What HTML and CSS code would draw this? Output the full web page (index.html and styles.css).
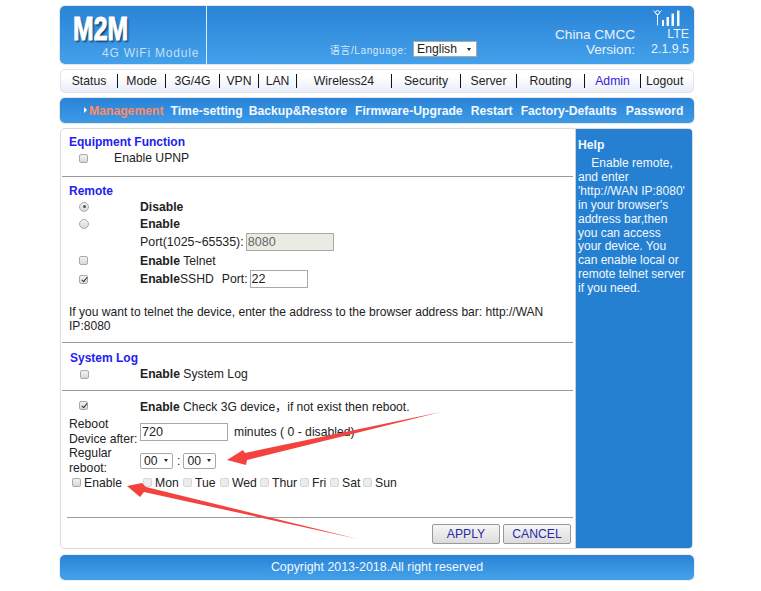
FILE: index.html
```html
<!DOCTYPE html>
<html lang="en">
<head>
<meta charset="utf-8">
<title>M2M 4G WiFi Module</title>
<link rel="stylesheet" href="styles.css">
</head>
<body>
<div class="page">
  <header class="head">
    <div class="brand">
      <div class="logo">M2M</div>
      <div class="tagline">4G WiFi Module</div>
    </div>
    <div class="head-main">
      <div class="lang"><span class="lang-label">语言/Language:</span><span class="fake-select lang-select">English<i class="caret"></i></span></div>
      <div class="status">
        <svg class="signal" width="28" height="16" viewBox="0 0 28 16">
          <g fill="none" stroke="#e8f2fb" stroke-width="1">
            <circle cx="4.5" cy="2.6" r="2"/>
            <path d="M0.5 0.5 L4.5 5 L8.5 0.5"/>
            <path d="M4.5 4 V15.5"/>
          </g>
          <g fill="#f4f9fd">
            <rect x="9" y="10" width="2" height="6"/>
            <rect x="13.5" y="7" width="2.5" height="9"/>
            <rect x="18.5" y="3.5" width="2.5" height="12.5"/>
            <rect x="24" y="0.5" width="2.5" height="15.5"/>
          </g>
        </svg>
        <div class="status-row"><span>China CMCC</span><span class="status-val">LTE</span></div>
        <div class="status-row"><span>Version:</span><span class="status-val">2.1.9.5</span></div>
      </div>
    </div>
  </header>

  <nav class="menu">
    <a class="m1">Status</a><a class="m2">Mode</a><a class="m3">3G/4G</a><a class="m4">VPN</a><a class="m5">LAN</a><a class="m6">Wireless24</a><a class="m7">Security</a><a class="m8">Server</a><a class="m9">Routing</a><a class="m10 active">Admin</a><a class="m11">Logout</a>
  </nav>

  <nav class="submenu">
    <a class="sub current"><i class="tri"></i>Management</a><a class="sub s-time">Time-setting</a><a class="sub">Backup&amp;Restore</a><a class="sub">Firmware-Upgrade</a><a class="sub">Restart</a><a class="sub s-fact">Factory-Defaults</a><a class="sub">Password</a>
  </nav>

  <main class="main">
    <section class="panel">
      <div class="block b-equip">
        <h3>Equipment Function</h3>
        <div class="row r16 narrow"><span class="cell"><i class="cb"></i></span><span>Enable UPNP</span></div>
      </div>
      <hr class="rule">
      <div class="block b-remote">
        <h3>Remote</h3>
        <div class="row r17"><span class="cell"><i class="rb on"></i></span><b>Disable</b></div>
        <div class="row r17"><span class="cell"><i class="rb"></i></span><b>Enable</b></div>
        <div class="row r20"><span class="cell"></span><span class="port-label">Port(1025~65535):</span><span class="input in-port disabled">8080</span></div>
        <div class="row r17"><span class="cell"><i class="cb"></i></span><span><b>Enable</b> Telnet</span></div>
        <div class="row r20"><span class="cell"><i class="cb on"></i></span><span><b>Enable</b>SSHD</span><span class="ssh-port">Port:</span><span class="input in-ssh">22</span></div>
        <p class="note">If you want to telnet the device, enter the address to the browser address bar: http://WAN IP:8080</p>
      </div>
      <hr class="rule">
      <div class="block b-log">
        <h3>System Log</h3>
        <div class="row r16"><span class="cell"><i class="cb"></i></span><span><b>Enable</b> System Log</span></div>
      </div>
      <hr class="rule">
      <div class="block b-reboot">
        <div class="row r17 r-check"><span class="cell"><i class="cb on"></i></span><span><b>Enable</b> Check 3G device，if not exist then reboot.</span></div>
        <div class="row r-lab r-boot"><label class="lab">Reboot Device after:</label><span class="input in-min">720</span><span class="mins">minutes ( 0 - disabled)</span></div>
        <div class="row r-lab r-reg"><label class="lab">Regular reboot:</label><span class="fake-select time">00<i class="caret"></i></span><span class="colon">:</span><span class="fake-select time">00<i class="caret"></i></span></div>
        <div class="row days">
          <span class="day-en"><i class="cb"></i>Enable</span>
          <span class="day d40"><i class="cb off"></i>Mon</span>
          <span class="day d37"><i class="cb off"></i>Tue</span>
          <span class="day d40"><i class="cb off"></i>Wed</span>
          <span class="day d40"><i class="cb off"></i>Thur</span>
          <span class="day d30"><i class="cb off"></i>Fri</span>
          <span class="day d33"><i class="cb off"></i>Sat</span>
          <span class="day d37"><i class="cb off"></i>Sun</span>
        </div>
      </div>
      <hr class="rule rule-last">
      <div class="actions"><button class="btn">APPLY</button><button class="btn">CANCEL</button></div>
    </section>
    <aside class="help">
      <h4>Help</h4>
      <p>&nbsp;&nbsp;&nbsp;&nbsp;Enable remote, and enter 'http://WAN IP:8080' in your browser's address bar,then you can access your device. You can enable local or remote telnet server if you need.</p>
    </aside>
    <svg class="arrows" width="761" height="591" viewBox="0 0 761 591">
      <path fill="#f4423f" d="M441 418 L245 459 L243 456 L227 466 L246 471 L247 466 Z"/>
      <path fill="#f4423f" d="M358 545 L146 493 L142 489 L127 492 L140 503 L144 498 Z"/>
    </svg>
  </main>

  <footer class="foot">Copyright 2013-2018.All right reserved</footer>
</div>
</body>
</html>
```

FILE: styles.css
```css
* { box-sizing: border-box; }
html, body { margin: 0; padding: 0; background: #fff; }
body {
  font-family: "Liberation Sans", Arial, "Noto Sans CJK SC", sans-serif;
  font-size: 12.2px;
  color: #222;
  height: 591px;
  overflow: hidden;
}
.page {
  width: 634px;
  margin-left: 60px;
  padding-top: 6px;
  display: flex;
  flex-direction: column;
  position: relative;
}
.head {
  height: 58px;
  display: flex;
  border-radius: 5px;
  background: linear-gradient(#2a83d6, #43a0ea);
  box-shadow: 0 0 0 1px #e6e6e6;
  color: #eef5fb;
}
.brand {
  width: 147px;
  border-right: 1px solid #dcecf8;
  padding-left: 13px;
}
.logo {
  font: bold 34px/34px "Liberation Sans", sans-serif;
  color: #fff;
  margin-top: 5px;
  -webkit-text-stroke: 1px #fff;
  text-shadow: 2px 2px 2px #0f3c68;
  transform: scaleX(0.73);
  transform-origin: left;
}
.tagline {
  font-size: 12px;
  line-height: 14px;
  letter-spacing: 0.8px;
  color: #c4dff4;
  margin: 1px 0 0 29px;
  white-space: nowrap;
}
.head-main {
  flex: 1;
  display: flex;
  justify-content: flex-end;
  align-items: flex-end;
  padding: 0 5px 7px 0;
}
.lang {
  display: flex;
  align-items: center;
  margin-right: 78px;
}
.lang-label { font-size: 10px; letter-spacing: .6px; margin-right: 6px; color: #d8e9f7; }
.status { width: 134px; position: relative; line-height: 15px; font-size: 13.6px; color: #e8f2fb; }
.signal { position: absolute; right: 8px; top: -17px; }
.status-row { display: flex; justify-content: space-between; }
.status-row span:first-child { width: 80px; text-align: right; white-space: nowrap; }
.status-row .status-val { width: 50px; text-align: right; font-size: 12.4px; }
.fake-select {
  display: inline-flex;
  align-items: center;
  justify-content: space-between;
  background: #fff;
  border: 1px solid #a9a9a9;
  color: #222;
}
.lang-select { width: 64px; height: 16px; padding: 0 5px 0 3px; }
.caret {
  width: 0; height: 0;
  border-left: 2.5px solid transparent;
  border-right: 2.5px solid transparent;
  border-top: 3.5px solid #222;
}
.menu {
  height: 24px;
  margin-top: 5px;
  display: flex;
  align-items: center;
  border: 1px solid #dfe3ea;
  border-radius: 5px;
  background: linear-gradient(#fff 30%, #e7edf8);
}
.menu a {
  display: block;
  line-height: 14px;
  text-align: center;
  border-right: 1px solid #111;
  color: #222;
  flex: none;
}
.m1 { width: 57px; } .m2 { width: 48px; } .m3 { width: 54px; } .m4 { width: 39px; }
.m5 { width: 38px; } .m6 { width: 95px; } .m7 { width: 69px; } .m8 { width: 56px; }
.m9 { width: 68px; } .m10 { width: 56px; }
.menu .m11 { flex: 1; border-right: 0; text-align: left; padding-left: 5px; }
.menu .active { color: #3322dd; }
.submenu {
  height: 25px;
  margin-top: 5px;
  display: flex;
  align-items: center;
  padding-left: 29px;
  gap: 8px;
  border-radius: 5px;
  background: linear-gradient(#2a83d6, #3d9ae6);
  box-shadow: 0 0 0 1px #e6e6e6;
  color: #f2f8fd;
  font-weight: bold;
  white-space: nowrap;
}
.sub.current { color: #ff8a65; position: relative; margin-right: -1px; }
.sub.s-time { margin-right: -2px; }
.sub.s-fact { margin-right: 1px; }
.tri {
  position: absolute;
  left: -5px; top: 3px;
  border-left: 3px solid #fff;
  border-top: 3.5px solid transparent;
  border-bottom: 3.5px solid transparent;
}
.main {
  height: 421px;
  margin-top: 5px;
  display: flex;
  border: 1px solid #dcdcdc;
  border-radius: 5px;
  width: 633px;
}
.panel { width: 515px; display: flex; flex-direction: column; border-right: 1px solid #d0d0d0; }
.arrows { position: absolute; left: -60px; top: -6px; pointer-events: none; }
.block { padding-left: 8px; }
.block h3 {
  margin: 0;
  font-size: 12px;
  line-height: 15px;
  font-weight: bold;
  color: #2222ee;
}
.rule { height: 0; border: 0; border-top: 1px solid #9a9a9a; margin: 0 2px 0 1px; }
.b-equip { padding-top: 6px; height: 47px; }
.b-remote { padding-top: 7px; height: 165px; }
.b-remote h3 { line-height: 14px; }
.b-log { padding: 8px 0 0 9px; height: 47px; }
.b-reboot { padding-top: 6px; height: 126px; }
.rule-last { margin-left: 6px; }
.row { display: flex; align-items: center; }
.r16 { height: 16px; }
.r17 { height: 17px; }
.r20 { height: 20px; }
.r-check { font-size: 12.1px; }
.cell { width: 71px; display: flex; padding-left: 10px; flex: none; }
.narrow .cell { width: 45px; }
.b-log .cell { width: 70px; }
.cb, .rb {
  display: inline-block;
  flex: none;
  width: 9px;
  height: 9px;
  border: 1px solid #aaa;
  background: linear-gradient(#f2f2f2, #d8d8d8);
  border-radius: 2px;
  position: relative;
}
.rb { width: 10px; height: 10px; border-radius: 50%; }
.rb.on::after {
  content: ""; position: absolute; left: 2.5px; top: 2.5px; width: 3px; height: 3px; border-radius: 50%; background: #555;
}
.cb.on::after {
  content: "";
  position: absolute; left: 2.5px; top: 0;
  width: 2px; height: 5px;
  border: solid #333;
  border-width: 0 1.5px 1.5px 0;
  transform: rotate(40deg);
}
.cb.off { background: #ececec; border-color: #d6d6d6; }
.input {
  display: inline-block;
  height: 18px;
  line-height: 16px;
  padding-left: 1px;
  border: 1px solid #a9a9a9;
  background: #fff;
  font-size: 12.6px;
}
.port-label { font-size: 12.4px; }
.in-port { width: 88px; margin-left: 2px; }
.disabled { background: #ebebe4; color: #666; }
.ssh-port { margin-left: 8px; }
.in-ssh { width: 58px; margin-left: 2px; }
.note { margin: 16px 0 0; width: 490px; line-height: 14px; font-size: 12.05px; }
.r-lab { height: 30px; }
.r-boot { margin-top: 2px; height: 31px; }
.r-reg { height: 27px; }
.lab { width: 71px; line-height: 15px; flex: none; }
.in-min { width: 88px; }
.mins { margin-left: 6px; }
.time { width: 33px; height: 16px; padding: 0 4px 0 3px; border-radius: 2px; }
.colon { margin: 0 3px 0 4px; }
.days { height: 17px; }
.day-en { width: 74px; display: flex; align-items: center; gap: 3px; padding-left: 3px; flex: none; }
.day { display: inline-flex; align-items: center; gap: 3px; flex: none; }
.d40 { width: 40px; }
.d37 { width: 37px; }
.d33 { width: 33px; }
.d30 { width: 30px; }
.actions { flex: 1; display: flex; justify-content: flex-end; align-items: flex-start; gap: 3px; padding: 6px 4px 0 0; }
.btn {
  width: 68px;
  height: 20px;
  padding: 0;
  font: 12.2px "Liberation Sans", sans-serif;
  color: #2a2aa8;
  border: 1px solid #999;
  border-radius: 2px;
  background: linear-gradient(#f6f6f6, #dcdcdc);
}
.help {
  flex: 1;
  background: #2680d2;
  color: #f3f8fc;
  padding: 9px 5px 9px 2px;
  border-radius: 0 3px 3px 0;
}
.help h4 { margin: 0 0 5px; font-size: 12.2px; line-height: 14px; }
.help p { margin: 0; line-height: 13.9px; font-size: 12px; }
.foot {
  height: 25px;
  margin-top: 6px;
  line-height: 25px;
  text-align: center;
  font-size: 12.4px;
  color: #f2f8fd;
  border-radius: 5px;
  background: linear-gradient(#2a83d6, #45a2ea);
  box-shadow: 0 0 0 1px #eee;
}
```
